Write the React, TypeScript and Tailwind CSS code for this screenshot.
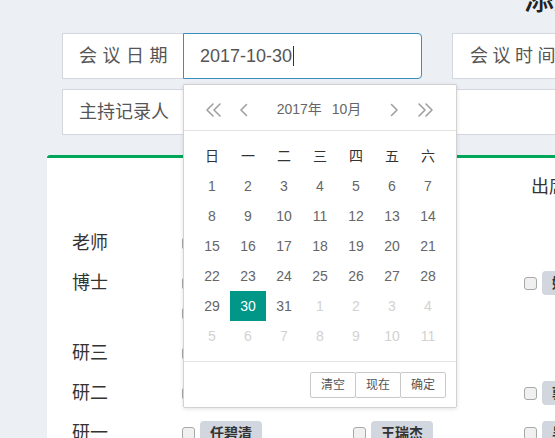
import React from "react";

const DoubleChev = ({ right }: { right?: boolean }) => (
  <svg width="18" height="14" viewBox="0 0 18 14" fill="none" stroke="#a0a0a0" strokeWidth="1.6" strokeLinecap="round" strokeLinejoin="round" style={right ? { transform: "scaleX(-1)" } : undefined}>
    <path d="M8 1 L2 7 L8 13" />
    <path d="M15 1 L9 7 L15 13" />
  </svg>
);

const Chev = ({ right }: { right?: boolean }) => (
  <svg width="9" height="14" viewBox="0 0 9 14" fill="none" stroke="#a0a0a0" strokeWidth="1.6" strokeLinecap="round" strokeLinejoin="round" style={right ? { transform: "scaleX(-1)" } : undefined}>
    <path d="M7.5 1.5 L2 7 L7.5 12.5" />
  </svg>
);

const rows: { label: string; items: string[] }[] = [
  { label: "老师", items: ["陈老师"] },
  { label: "博士", items: ["李明远", "张华宇", "姚文静", "刘洋"] },
  { label: "研三", items: ["赵磊", "孙丽娜"] },
  { label: "研二", items: ["周杰", "吴敏", "郭晓峰"] },
  { label: "研一", items: ["任碧清", "王瑞杰", "吴雨桐"] },
];

const days: { d: number; other?: boolean; sel?: boolean }[] = [
  ...Array.from({ length: 31 }, (_, i) => ({ d: i + 1, sel: i + 1 === 30 })),
  ...Array.from({ length: 11 }, (_, i) => ({ d: i + 1, other: true })),
];

export default function App() {
  return (
    <div className="relative w-[555px] h-[438px] overflow-hidden bg-[#ecf0f5] font-['Liberation_Sans','Noto_Sans_CJK_SC',sans-serif]">
      {/* title */}
      <div className="flex items-start h-[33px] pl-[524px]">
        <div className="-mt-[16px] text-[30px] leading-[30px] whitespace-nowrap text-[#222] font-medium">添加会议记录</div>
      </div>

      {/* row 1 */}
      <div className="flex pl-[62px]">
        <div className="w-[122px] h-[46px] shrink-0 bg-white border border-[#d2d6de] flex items-center pl-[16px] text-[18px] tracking-[5.5px] text-[#555]">会议日期</div>
        <div className="-ml-px w-[239px] h-[46px] shrink-0 bg-white border border-[#3c8dbc] rounded-r-[4px] flex items-center pl-[16px] text-[18px] text-[#555]">
          2017-10-30<span className="ml-[1px] w-px h-[20px] bg-[#333]" />
        </div>
        <div className="ml-[30px] w-[150px] h-[46px] shrink-0 bg-white border border-[#d2d6de] flex items-center pl-[17px] text-[18px] tracking-[4.5px] text-[#555] whitespace-nowrap">会议时间</div>
      </div>

      {/* row 2 */}
      <div className="flex pl-[62px] mt-[10px]">
        <div className="w-[122px] h-[46px] shrink-0 bg-white border border-[#d2d6de] flex items-center pl-[16px] text-[18px] text-[#555] whitespace-nowrap">主持记录人</div>
        <div className="-ml-px w-[420px] h-[46px] shrink-0 bg-white border border-[#d2d6de]" />
      </div>

      {/* card */}
      <div className="ml-[47px] mt-[20px] w-[720px] bg-white border-t-[3px] border-[#00a65a] rounded-t-[3px] shadow-[0_1px_1px_rgba(0,0,0,0.1)]">
        <div className="h-[65px] pt-[17px] pl-[484px] text-[18px] leading-[24px] text-[#333] whitespace-nowrap">出席人员</div>
        {rows.map((r) => (
          <div key={r.label} className="flex pl-[25px] py-[5px]">
            <div className="w-[110px] h-[30px] shrink-0 flex items-center text-[18px] text-[#333]">{r.label}</div>
            <div className="flex flex-wrap w-[513px] shrink-0">
              {r.items.map((n) => (
                <div key={n} className="w-[171px] h-[30px] shrink-0 flex items-center">
                  <span className="w-[13px] h-[13px] shrink-0 rounded-[3px] border border-[#a8a8a8] bg-[#f0f0f0]" />
                  <span className="ml-[5px] h-[24px] px-[10px] rounded-[4px] bg-[#d2d6de] flex items-center text-[14px] font-bold text-[#333] whitespace-nowrap">{n}</span>
                </div>
              ))}
            </div>
          </div>
        ))}
      </div>

      {/* date picker popup */}
      <div className="absolute left-[183px] top-[84px] w-[274px] bg-white border border-[#d2d2d2] rounded-[2px] shadow-[0_1px_4px_rgba(0,0,0,0.12)]">
        <div className="h-[46px] border-b border-[#e2e2e2] flex items-center pt-[4px]">
          <div className="flex items-center pl-[21px]">
            <DoubleChev />
            <span className="ml-[16px] flex"><Chev /></span>
          </div>
          <div className="flex-1 flex justify-center text-[14px] text-[#666]">
            <span>2017年</span>
            <span className="ml-[10px]">10月</span>
          </div>
          <div className="flex items-center pr-[22px]">
            <Chev right />
            <span className="ml-[17px] flex"><DoubleChev right /></span>
          </div>
        </div>
        <div className="px-[10px] pt-[10px] pb-[10px]">
          <div className="grid grid-cols-7 w-[252px]">
            {["日", "一", "二", "三", "四", "五", "六"].map((w) => (
              <div key={w} className="h-[30px] flex items-center justify-center text-[14px] text-[#333]">{w}</div>
            ))}
            {days.map((x, i) => (
              <div
                key={i}
                className={
                  "h-[30px] flex items-center justify-center text-[14px] " +
                  (x.sel ? "bg-[#009688] text-white" : x.other ? "text-[#d2d2d2]" : "text-[#666]")
                }
              >
                {x.d}
              </div>
            ))}
          </div>
        </div>
        <div className="border-t border-[#e2e2e2] pt-[10px] pb-[9px] pr-[10px] flex justify-end">
          {["清空", "现在", "确定"].map((b, i) => (
            <div key={b} className={(i > 0 ? "-ml-px " : "") + "w-[46px] h-[26px] flex items-center justify-center border border-[#c9c9c9] rounded-[2px] text-[12px] text-[#555] bg-white"}>{b}</div>
          ))}
        </div>
      </div>
    </div>
  );
}
